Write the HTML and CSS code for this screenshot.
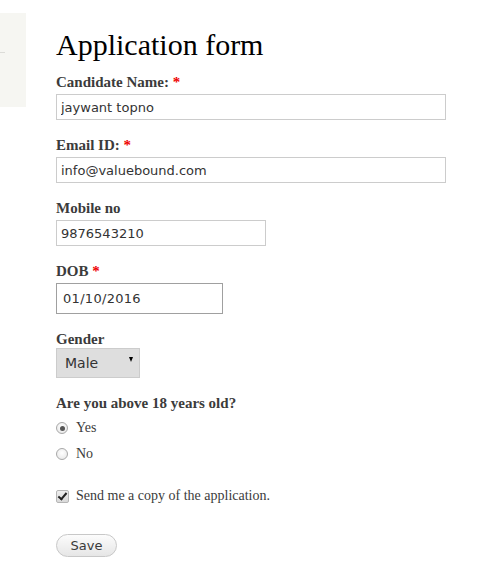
FILE: index.html
```html
<!DOCTYPE html>
<html lang="en">
<head>
  <meta charset="UTF-8" />
  <meta name="viewport" content="width=device-width, initial-scale=1.0"/>
  <title>Application form</title>
  <link rel="stylesheet" href="styles.css">
</head>
<body>
  <div class="page">
    <aside class="sidebar">
      <div class="sidebar-rule"></div>
    </aside>

    <main class="content">
      <h1 class="title">Application form</h1>

      <form class="app-form" onsubmit="return false;">
        <div class="form-item">
          <label for="name">Candidate Name: <span class="req">*</span></label>
          <input type="text" id="name" class="text wide" value="jaywant topno" />
        </div>

        <div class="form-item">
          <label for="email">Email ID: <span class="req">*</span></label>
          <input type="text" id="email" class="text wide" value="info@valuebound.com" />
        </div>

        <div class="form-item">
          <label for="mobile">Mobile no</label>
          <input type="text" id="mobile" class="text medium" value="9876543210" />
        </div>

        <div class="form-item">
          <label for="dob">DOB <span class="req">*</span></label>
          <input type="text" id="dob" class="text date" value="01/10/2016" />
        </div>

        <div class="form-item select-item">
          <label for="gender">Gender</label>
          <div class="select-wrap">
            <select id="gender" class="select">
              <option>Male</option>
              <option>Female</option>
            </select>
          </div>
        </div>

        <div class="form-item">
          <label>Are you above 18 years old?</label>
          <div class="options">
            <label class="option"><input type="radio" name="age" class="radio" checked /> Yes</label>
            <label class="option"><input type="radio" name="age" class="radio" /> No</label>
          </div>
        </div>

        <div class="checkbox-item">
          <label class="option"><input type="checkbox" class="check" checked /> Send me a copy of the application.</label>
        </div>

        <div class="actions">
          <button type="submit" class="button">Save</button>
        </div>
      </form>
    </main>
  </div>
</body>
</html>
```

FILE: styles.css
```css
* {
  box-sizing: border-box;
}

body {
  margin: 0;
  background: #fff;
  font-family: "Liberation Serif", "Times New Roman", serif;
  color: #3b3b3b;
}

.page {
  display: flex;
  align-items: flex-start;
}

/* leftover of the sidebar block */
.sidebar {
  width: 26px;
  height: 94px;
  margin-top: 13px;
  background: #f6f6f2;
}
.sidebar-rule {
  width: 5px;
  height: 1px;
  margin-top: 39px;
  background: #dcdcd8;
}

.content {
  padding-left: 30px;
  padding-top: 27px;
}

.title {
  margin: 0 0 10px;
  font-size: 30px;
  line-height: 36px;
  font-weight: normal;
  color: #000;
}

.form-item {
  margin-bottom: 16px;
}
.form-item > label {
  display: block;
  font-size: 15px;
  line-height: 18px;
  font-weight: bold;
  margin-bottom: 3px;
}
.select-item > label {
  margin-bottom: 0;
}
.req {
  color: #e00;
}

input.text {
  display: block;
  height: 26px;
  padding: 0 4px;
  border: 1px solid #ccc;
  font-family: "DejaVu Sans", Verdana, sans-serif;
  font-size: 13px;
  color: #333;
  background: #fff;
}
input.wide { width: 390px; }
input.medium { width: 210px; }
input.date {
  width: 167px;
  height: 31px;
  padding-left: 6px;
  border-color: #a0a0a0;
  letter-spacing: 0.3px;
}

.select-wrap {
  position: relative;
  width: 84px;
}
.select-wrap::after {
  content: "";
  position: absolute;
  right: 7px;
  top: 9px;
  border-left: 2.5px solid transparent;
  border-right: 2.5px solid transparent;
  border-top: 5px solid #000;
  pointer-events: none;
}
.select {
  display: block;
  -webkit-appearance: none;
  appearance: none;
  width: 84px;
  height: 30px;
  margin: 0;
  padding: 0 0 0 8px;
  border: 1px solid #ccc;
  border-radius: 0;
  background: #dedede;
  font-family: "DejaVu Sans", Verdana, sans-serif;
  font-size: 14px;
  color: #333;
}

.options {
  margin-top: 3px;
}
.option {
  display: flex;
  align-items: center;
  gap: 8px;
  height: 26px;
  font-size: 14px;
  line-height: 18px;
  color: #3b3b3b;
}

.radio {
  -webkit-appearance: none;
  appearance: none;
  margin: 0;
  width: 12px;
  height: 12px;
  border-radius: 50%;
  border: 1px solid #a8a8a8;
  background: radial-gradient(circle at 50% 40%, #fff 0%, #e4e4e4 100%);
  position: relative;
}
.radio:checked::after {
  content: "";
  position: absolute;
  left: 2.5px;
  top: 2.5px;
  width: 5px;
  height: 5px;
  border-radius: 50%;
  background: #555;
}

.checkbox-item {
  margin-top: 15px;
}
.checkbox-item .option {
  gap: 7px;
}
.check {
  -webkit-appearance: none;
  appearance: none;
  margin: 0;
  width: 13px;
  height: 13px;
  border: 1px solid #b5b5b5;
  border-radius: 2px;
  background: linear-gradient(#eee, #d9d9d9);
  position: relative;
}
.check:checked::after {
  content: "";
  position: absolute;
  left: 3px;
  top: 0px;
  width: 3px;
  height: 7px;
  border: solid #222;
  border-width: 0 2px 2px 0;
  transform: rotate(40deg);
}

.actions {
  margin-top: 25px;
}
.button {
  height: 23px;
  width: 61px;
  padding: 0;
  border: 1px solid #c8c8c8;
  border-radius: 12px;
  background: linear-gradient(#fcfcfc, #e6e6e6);
  font-family: "DejaVu Sans", Verdana, sans-serif;
  font-size: 13px;
  color: #3a3a3a;
  cursor: pointer;
}
```
